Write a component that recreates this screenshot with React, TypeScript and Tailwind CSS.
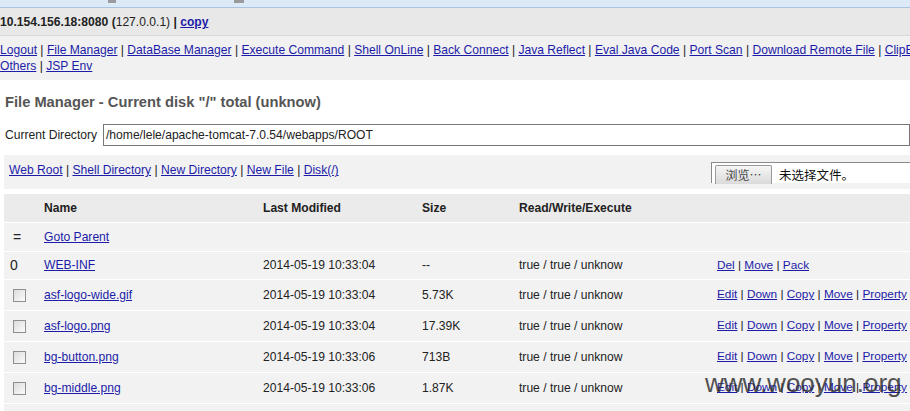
import React from 'react';

const font = "font-['Liberation_Sans',Arial,sans-serif]";
const linkCls = 'text-[#1c1ca8] underline';

const navLinks = [
  'Logout',
  'File Manager',
  'DataBase Manager',
  'Execute Command',
  'Shell OnLine',
  'Back Connect',
  'Java Reflect',
  'Eval Java Code',
  'Port Scan',
  'Download Remote File',
  'ClipBoard',
];

const files = [
  { name: 'asf-logo-wide.gif', time: '2014-05-19 10:33:04', size: '5.73K' },
  { name: 'asf-logo.png', time: '2014-05-19 10:33:04', size: '17.39K' },
  { name: 'bg-button.png', time: '2014-05-19 10:33:06', size: '713B' },
  { name: 'bg-middle.png', time: '2014-05-19 10:33:06', size: '1.87K' },
];

function Links({ items }: { items: string[] }) {
  return (
    <>
      {items.map((t, i) => (
        <React.Fragment key={t}>
          {i > 0 && <span> | </span>}
          <a href="#" className={linkCls}>
            {t}
          </a>
        </React.Fragment>
      ))}
    </>
  );
}

const cols = 'grid grid-cols-[40px_219px_159px_97px_198px_1fr] items-center';

function Checkbox() {
  return (
    <span className="ml-[9px] inline-block h-[13px] w-[13px] border border-[#8f8f8f] bg-gradient-to-br from-[#dcdcdc] to-[#fbfbfb]" />
  );
}

export default function App() {
  return (
    <div className={`${font} relative h-[411px] w-[910px] overflow-hidden bg-white text-[12.1px] text-[#222]`}>
      {/* browser strip */}
      <div className="flex h-[8px] border-b border-[#a9c4e0] bg-[#dce9f7]">
        <span className="ml-[108px] h-[3px] w-[8px] bg-[#9a9a9a]" />
        <span className="ml-[118px] h-[3px] w-[10px] bg-[#9a9a9a]" />
      </div>

      {/* host bar */}
      <div className="flex h-[28px] items-center border-b border-[#d8d8d8] bg-[#e8e8e8] pt-[2px] leading-none">
        <b>10.154.156.18:8080 (</b>
        <span>127.0.0.1)</span>
        <b className="whitespace-pre">
          {' | '}
          <a href="#" className={linkCls}>
            copy
          </a>
        </b>
      </div>

      {/* nav */}
      <div className="h-[44px] bg-[#f1f1f1] pt-[6px] leading-[16px]">
        <div className="whitespace-nowrap">
          <Links items={navLinks} />
        </div>
        <div className="whitespace-nowrap">
          <Links items={['Others', 'JSP Env']} />
        </div>
      </div>

      {/* title */}
      <h2 className="ml-[5px] mt-[14px] text-[14.7px] font-bold leading-[17px] text-[#555]">
        File Manager - Current disk &quot;/&quot; total (unknow)
      </h2>

      {/* current directory */}
      <div className="ml-[5px] mt-[13px] flex items-center">
        <span className="w-[98px]">Current Directory</span>
        <div className="flex h-[22px] flex-1 items-center border border-[#777] pl-[2px]">
          /home/lele/apache-tomcat-7.0.54/webapps/ROOT
        </div>
      </div>

      {/* shortcut links */}
      <div className="ml-[4px] mt-[9px] flex h-[34px] items-center bg-[#f2f2f2] pl-[5px]">
        <div className="mb-[3px] flex-1">
          <Links items={['Web Root', 'Shell Directory', 'New Directory', 'New File', 'Disk(/)']} />
        </div>
        <div className="mb-[6px] flex h-[21px] w-[199px] items-start self-end border-l border-t border-[#8a8a8a] bg-white pl-[3px] pt-[2px]">
          <span className="flex h-[19px] w-[57px] items-center justify-center rounded-t-[2px] border border-b-0 border-[#9a9a9a] bg-gradient-to-b from-[#f6f6f6] to-[#dadada] font-['Noto_Sans_CJK_SC',sans-serif] text-[12px] text-[#444]">
            浏览…
          </span>
          <span className="ml-[7px] font-['Noto_Sans_CJK_SC',sans-serif] text-[12.5px] leading-[19px] text-[#111]">
            未选择文件。
          </span>
        </div>
      </div>

      {/* table */}
      <div className="ml-[4px] mt-[5px]">
        <div className={`${cols} h-[28px] bg-[#ebebeb] font-bold`}>
          <span />
          <span>Name</span>
          <span>Last Modified</span>
          <span>Size</span>
          <span>Read/Write/Execute</span>
          <span />
        </div>
        <div className={`${cols} h-[29px] border-t border-white bg-[#f2f2f2]`}>
          <span className="pl-[9px] text-[14px]">=</span>
          <a href="#" className={linkCls}>
            Goto Parent
          </a>
        </div>
        <div className={`${cols} h-[28px] border-t border-white bg-[#f2f2f2]`}>
          <span className="pl-[6px] text-[14px]">0</span>
          <a href="#" className={linkCls}>
            WEB-INF
          </a>
          <span>2014-05-19 10:33:04</span>
          <span>--</span>
          <span>true / true / unknow</span>
          <span className="whitespace-nowrap text-[11.8px]">
            <Links items={['Del', 'Move', 'Pack']} />
          </span>
        </div>
        {files.map((f) => (
          <div key={f.name} className={`${cols} h-[31px] border-t border-white bg-[#f2f2f2]`}>
            <Checkbox />
            <a href="#" className={linkCls}>
              {f.name}
            </a>
            <span>{f.time}</span>
            <span>{f.size}</span>
            <span>true / true / unknow</span>
            <span className="whitespace-nowrap text-[11.8px]">
              <Links items={['Edit', 'Down', 'Copy', 'Move', 'Property']} />
            </span>
          </div>
        ))}
        <div className="h-[9px] border-t border-white bg-[#f2f2f2]" />
      </div>

      {/* watermark */}
      <div className="pointer-events-none absolute left-[705px] top-[370px] text-[26px] leading-none text-[#2a2a2a] opacity-80">
        www.wooyun.org
      </div>
    </div>
  );
}
